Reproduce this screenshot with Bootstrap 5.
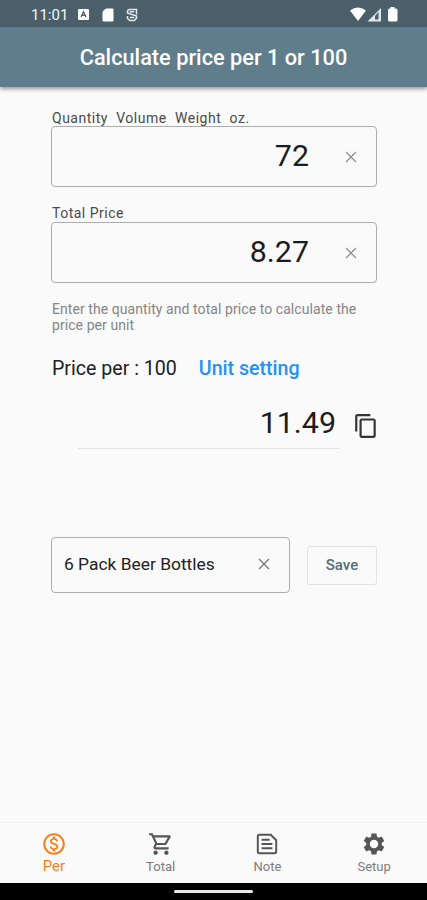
<!DOCTYPE html>
<html lang="en">
<head>
<meta charset="utf-8">
<meta name="viewport" content="width=device-width, initial-scale=1">
<title>Calculate price per 1 or 100</title>
<link href="https://cdn.jsdelivr.net/npm/bootstrap@5.3.0/dist/css/bootstrap.min.css" rel="stylesheet">
<style>
body{font-family:Roboto,"Liberation Sans",sans-serif;background:#fafafa;color:#212121;height:900px;overflow:hidden}
svg{display:block;flex:none}
.status-strip{height:27px;background:#4a5f6a;color:#f4f7f8;padding:3px 28px 0 31px;font-size:15px;line-height:24px}
.ic-kbd{margin-top:5px}
.ic-sd{margin-top:5px}
.ic-sync,.ic-signal{margin-top:4px}
.title-bar{height:60px;background:#607d8c;color:#fff;padding-top:2px;box-shadow:0 2px 4px rgba(0,0,0,.4)}
.title-bar h1{font-size:21.75px;font-weight:500;line-height:26px}
.page-main{padding:23px 50px 0 51px}
.field-label{font-size:14px;line-height:17px;height:16px;padding-left:1px;color:#4a4a4a;letter-spacing:.5px}
.field-label.wide{word-spacing:4.4px}
.second-label{margin-top:18px;height:17px}
.outlined{border:1px solid #adadad;border-radius:4px;height:61px;padding-right:19px}
.outlined .num{margin:-1px 36px 0 0}
.outlined.short{height:56px;width:239px;padding:0 19px 2px 12px;font-size:17.4px}
.num{font-size:30.4px;line-height:36px;color:#1c1c1c}
.clear-x{stroke:#8e8e8e}
.hint{font-size:14px;line-height:16px;color:#858585;margin-top:18px;padding-left:1px;letter-spacing:.07px}
.per-row{margin-top:24px;font-size:19.6px;line-height:24px;padding-left:1px}
.unit-btn{font-weight:500;color:#2492f4;margin-left:22px}
.result-row{margin-top:18px}
.result{width:262px;height:50px;margin-left:27px;border-bottom:1px solid #e5e5e5;padding:6px 4px 0 0}
.copy-ic{margin:14px 0 0 13px}
.save-row{margin-top:88px}
.save-btn{width:70px;height:39px;margin-left:17px;border:1px solid #e2e2e2;border-radius:3px;color:#526d79;font-size:15px;font-weight:500}
.tabs-bottom{height:61px;border-top:1px solid #f1f1f1;color:#7c7c7c;font-size:13px}
.tabs-bottom a{color:inherit;padding:8px 0 0 1px;line-height:16px}
.tabs-bottom a span{margin-top:2px}
.tabs-bottom svg{color:#555}
.tabs-bottom a.current,.tabs-bottom a.current svg{color:#f58220}
.tabs-bottom a.current{font-size:15px}
.tabs-bottom a.current span{margin-top:1px}
.system-bar{height:17px;background:#000}
.pill{width:79px;height:3px;background:#e8e8e8}
</style>
</head>
<body class="d-flex flex-column">
<div class="status-strip d-flex align-items-start flex-shrink-0">
  <span>11:01</span>
  <svg class="ic-kbd ms-2 me-1" width="13" height="13" viewBox="0 0 13 13"><rect x="2" y="1" width="11" height="11" rx="1" fill="#fff"/><path d="M5 9 7.500 3.700 10 9M6 7.300h3" fill="none" stroke="#4a5f6a" stroke-width="1.300"/></svg>
  <svg class="ic-sd ms-1" width="19" height="14" viewBox="0 0 19 14"><path d="M9 .5h6.500a1 1 0 0 1 1 1v11a1 1 0 0 1-1 1h-9a1 1 0 0 1-1-1V3.500z" fill="#fff"/></svg>
  <svg class="ic-sync ms-2" width="15" height="15" viewBox="0 0 15 15"><path d="M12.500 7.500V2.500H5.500a2 2 0 0 0-2 2V6l9 3v2.300L10.300 13.500H5.700L3.500 11.500V9M5.500 4.800h4.700M5.800 10.500h4.500" fill="none" stroke="#e3e9ec" stroke-width="1.500"/></svg>
  <svg class="ic-signal ms-auto" width="50" height="16" viewBox="0 0 50 16"><path d="M1 3.500Q9 -2.500 17 3.500L9 14z" fill="#fff"/><path d="M18.500 14.500 32 1v13.500z" fill="#dfe5e8"/><path d="M26 9v3.500h3.500V5z" fill="#4a5f6a"/><path d="M41.500 0h4v1.500h1.500q1.500 0 1.500 1.500v10q0 1.500-1.500 1.500h-6.500Q39 14.500 39 13V3q0-1.500 1.500-1.500h1z" fill="#fff"/></svg>
</div>
<header class="title-bar d-flex align-items-center justify-content-center flex-shrink-0"><h1 class="m-0">Calculate price per 1 or 100</h1></header>
<main class="page-main flex-grow-1">
  <div class="field-label wide">Quantity Volume Weight oz.</div>
  <div class="outlined d-flex align-items-center justify-content-end">
    <span class="num">72</span>
    <svg width="12" height="12" viewBox="0 0 12 12"><path class="clear-x" d="m1 1 10 10M11 1 1 11" stroke-width="1.300"/></svg>
  </div>
  <div class="field-label second-label">Total Price</div>
  <div class="outlined d-flex align-items-center justify-content-end">
    <span class="num">8.27</span>
    <svg width="12" height="12" viewBox="0 0 12 12"><path class="clear-x" d="m1 1 10 10M11 1 1 11" stroke-width="1.300"/></svg>
  </div>
  <p class="hint mb-0">Enter the quantity and total price to calculate the<br>price per unit</p>
  <div class="per-row d-flex"><span>Price per : 100</span><a class="unit-btn text-decoration-none" href="#">Unit setting</a></div>
  <div class="result-row d-flex">
    <div class="result d-flex flex-shrink-0 justify-content-end"><span class="num">11.49</span></div>
    <svg class="copy-ic" width="26" height="26" viewBox="0 0 24 24" fill="#333"><path d="M16 1H4c-1.100 0-2 .9-2 2v14h2V3h12V1zm3 4H8c-1.100 0-2 .9-2 2v14c0 1.100.9 2 2 2h11c1.100 0 2-.9 2-2V7c0-1.100-.9-2-2-2zm0 16H8V7h11v14z"/></svg>
  </div>
  <div class="save-row d-flex align-items-center">
    <div class="outlined short d-flex align-items-center justify-content-between"><span>6 Pack Beer Bottles</span>
      <svg width="12" height="12" viewBox="0 0 12 12"><path d="m1 1 10 10M11 1 1 11" stroke="#777" stroke-width="1.300"/></svg></div>
    <button class="save-btn btn p-0">Save</button>
  </div>
</main>
<nav class="tabs-bottom d-flex flex-shrink-0 text-center">
  <a class="current col-3 d-flex flex-column align-items-center text-decoration-none" href="#"><svg width="26" height="26" viewBox="0 0 24 24" fill="currentColor"><path d="M12 2C6.480 2 2 6.480 2 12s4.480 10 10 10 10-4.480 10-10S17.520 2 12 2zm0 18c-4.410 0-8-3.590-8-8s3.590-8 8-8 8 3.590 8 8-3.590 8-8 8zm.31-8.860c-1.770-.45-2.340-.94-2.340-1.670 0-.84.79-1.430 2.100-1.430 1.380 0 1.900.66 1.940 1.640h1.710c-.05-1.340-.87-2.570-2.490-2.970V5H10.900v1.690c-1.510.32-2.720 1.300-2.720 2.810 0 1.790 1.490 2.690 3.660 3.210 1.950.46 2.340 1.150 2.340 1.870 0 .53-.39 1.390-2.100 1.390-1.600 0-2.230-.72-2.320-1.640H8.040c.1 1.700 1.360 2.660 2.860 2.970V19h2.340v-1.670c1.520-.29 2.720-1.160 2.730-2.770-.01-2.200-1.900-2.960-3.660-3.420z"/></svg><span>Per</span></a>
  <a class="col-3 d-flex flex-column align-items-center text-decoration-none" href="#"><svg width="26" height="26" viewBox="0 0 24 24" fill="currentColor"><path d="M15.550 13c.75 0 1.410-.41 1.750-1.030l3.580-6.490c.37-.66-.11-1.480-.87-1.480H5.210l-.94-2H1v2h2l3.600 7.590-1.350 2.440C4.520 15.370 5.480 17 7 17h12v-2H7l1.100-2h7.450zM6.160 6h12.150l-2.760 5H8.530L6.160 6zM7 18c-1.100 0-1.990.9-1.990 2S5.900 22 7 22s2-.9 2-2-.9-2-2-2zm10 0c-1.100 0-1.990.9-1.990 2s.89 2 1.990 2 2-.9 2-2-.9-2-2-2z"/></svg><span>Total</span></a>
  <a class="col-3 d-flex flex-column align-items-center text-decoration-none" href="#"><svg width="26" height="26" viewBox="0 0 24 24" fill="none" stroke="currentColor" stroke-width="1.800"><path d="M5 3.500h10.500l5 5V19a1.500 1.500 0 0 1-1.500 1.500H5A1.500 1.500 0 0 1 3.500 19V5A1.500 1.500 0 0 1 5 3.500zM7 8h7.500M7 12h10M7 16h10"/></svg><span>Note</span></a>
  <a class="col-3 d-flex flex-column align-items-center text-decoration-none" href="#"><svg width="26" height="26" viewBox="0 0 24 24" fill="currentColor"><path d="M19.140 12.940c.04-.3.06-.61.06-.94 0-.32-.02-.64-.07-.94l2.030-1.580c.18-.14.23-.41.12-.61l-1.920-3.320c-.12-.22-.37-.29-.59-.22l-2.390.96c-.5-.38-1.030-.7-1.620-.94l-.36-2.540c-.04-.24-.24-.41-.48-.41h-3.840c-.24 0-.43.17-.47.41l-.36 2.540c-.59.24-1.130.57-1.620.94l-2.390-.96c-.22-.08-.47 0-.59.22L2.740 8.870c-.12.21-.08.47.12.61l2.030 1.580c-.05.3-.09.63-.09.94s.02.64.07.94l-2.030 1.580c-.18.14-.23.41-.12.61l1.920 3.320c.12.22.37.29.59.22l2.390-.96c.5.38 1.030.7 1.620.94l.36 2.540c.05.24.24.41.48.41h3.840c.24 0 .44-.17.47-.41l.36-2.540c.59-.24 1.130-.56 1.620-.94l2.390.96c.22.08.47 0 .59-.22l1.920-3.320c.12-.22.07-.47-.12-.61l-2.010-1.580zM12 15.900c-2.150 0-3.900-1.750-3.900-3.900s1.750-3.900 3.900-3.900 3.900 1.750 3.900 3.900-1.750 3.900-3.900 3.900z"/></svg><span>Setup</span></a>
</nav>
<div class="system-bar d-flex align-items-center justify-content-center flex-shrink-0"><div class="pill rounded-pill"></div></div>
<script src="https://cdn.jsdelivr.net/npm/bootstrap@5.3.0/dist/js/bootstrap.bundle.min.js"></script>
</body>
</html>
